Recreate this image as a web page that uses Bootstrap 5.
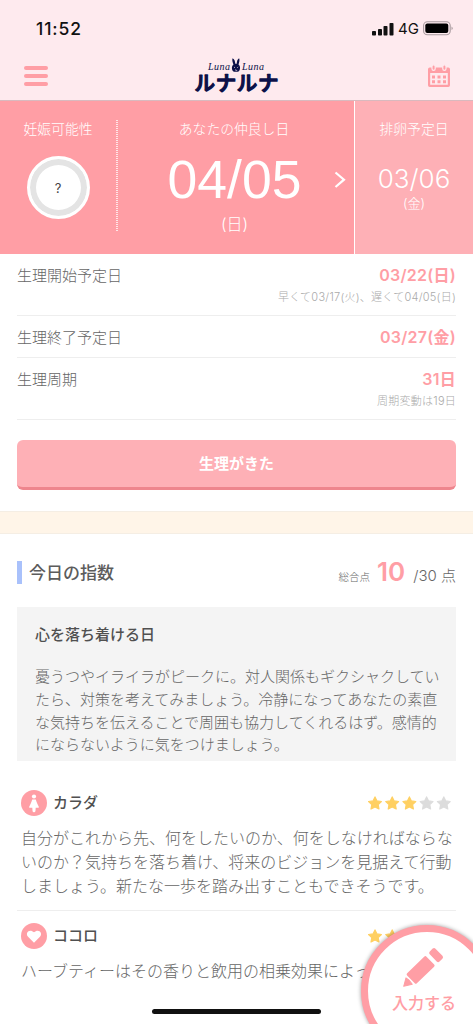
<!DOCTYPE html>
<html lang="ja">
<head>
<meta charset="utf-8">
<meta name="viewport" content="width=device-width, initial-scale=1">
<title>ルナルナ</title>
<link href="https://cdn.jsdelivr.net/npm/bootstrap@5.3.0/dist/css/bootstrap.min.css" rel="stylesheet">
<style>
:root{--pink:#ff9ea5;--pale:#feb0b6;--ink:#666}
html,body{height:1024px;overflow:hidden}
body{background:#fff;color:var(--ink);font-family:Inter,"Noto Sans CJK JP",sans-serif;font-size:15px;font-weight:300;line-height:20px}
.screen{width:473px;height:1024px;overflow:hidden;white-space:nowrap}
.gutter{padding-left:17px;padding-right:17px}
.top{height:101px;background:#feeaee;border-bottom:1px solid #d9b9be}
.status{height:53px;padding:4px 19px 0 36px;color:#111}
.clock{font-size:17.5px;font-weight:500;letter-spacing:.9px}
.net{font-size:15px;font-weight:400}
.bar{height:47px;padding:0 22px 2px 24px}
.logo{color:#0c1048;width:90px;height:42px;margin:4px 0 0 -2px;overflow:visible}
.burger i{display:block;width:24px;height:4px;border-radius:2px;background:var(--pink)}
.hero{height:153px;color:#fff;padding-top:0}
.chance{width:116px;background:var(--pink)}
.dots{width:2px;height:112px;margin-top:19px;background:repeating-linear-gradient(#ffe6e8 0 1px,var(--pink) 1px 2px)}
.hero small{font-size:13.8px;line-height:20px}
.hero .cap{margin-top:2px}
.ring{width:63px;height:63px;margin-top:17px;border:3px solid #fff;box-shadow:inset 0 0 0 6px #e4e4e4;background:#fff;color:#444;font-size:13px;font-weight:400}
.best{width:238px;background:var(--pink);position:relative}
.best .cap{margin-left:-4px}
.big{font:400 53.5px/60px "Liberation Sans",sans-serif;margin:11px 0 0 -3px}
.wday{font-size:16px;margin:4px 0 0 -3px}
.ovu{background:var(--pale);border-left:1px solid #fff}
.ovu .date{font-size:26px;font-weight:300;line-height:32px;margin-top:24px}
.ovu .wk{font-size:13px;margin-top:-2px}
.line-row{border-bottom:1px solid #eee}
.pair{padding-top:12px}
.pair>:last-child{margin-top:-1px}
.val{color:var(--pink);font-weight:600;font-size:16px;letter-spacing:.25px}
.sub{font-size:11px;line-height:16px;color:#aaa;letter-spacing:.25px}
.came{height:50px;margin-top:20px;padding-top:2px;background:var(--pale);border:0;border-bottom:3px solid #ee858d;border-radius:6px;color:#fff;font-weight:600;font-size:15px;line-height:20px}
.band{height:23px;margin-top:21px;background:#fff5e8;border-top:1px solid #f5eee4;border-bottom:1px solid #f5eee4}
.tick{width:5px;height:23px;background:#a9c1fb}
.ttl{font-size:17px;font-weight:500;color:#5c5c5c;line-height:24px;margin-left:7px}
.index-head{height:73px;padding-top:4px}
.score{padding-top:5px}
.score .cap{font-size:10.5px}
.score .pts{font-size:26px;font-weight:600;color:var(--pink);margin:0 8px 0 7px}
.advice{background:#f4f4f4;height:154px;padding:18px 18px 0}
.advice p{line-height:22.8px;padding-top:21px}
.cat{font-weight:500;color:#505050}
.long{font-size:16px;line-height:24px}
.fab{position:absolute;left:361px;top:925px;width:132px;height:132px;border:7px solid var(--pink);border-radius:50%;background:#fff;box-shadow:0 0 4px rgba(0,0,0,.4);color:var(--pink)}
.home{position:absolute;left:152px;top:1009px;width:169px;height:5px;border-radius:3px;background:#111}
</style>
</head>
<body>
<svg width="0" height="0" class="position-absolute"><defs>
<path id="star" d="M7 .9 9 4.9 13.4 5.500 10.200 8.600 11 13 7 11 3 13 3.800 8.600.6 5.500 5 4.900Z" stroke-width="1.200" stroke-linejoin="round"/>
</defs></svg>
<div class="screen position-relative">
  <header class="top">
    <div class="status d-flex align-items-center justify-content-between">
      <span class="clock">11:52</span>
      <div class="d-flex align-items-center">
        <svg width="22" height="14" viewBox="0 0 22 14" fill="#111"><rect x="0" y="9" width="4" height="4.500" rx=".8"/><rect x="6" y="7" width="4" height="6.500" rx=".8"/><rect x="11.500" y="4" width="4" height="9.500" rx=".8"/><rect x="17.500" y="1" width="4" height="12.500" rx=".8"/></svg>
        <span class="net ms-1 me-1">4G</span>
        <svg width="31" height="15" viewBox="0 0 31 15"><rect x=".6" y=".8" width="26.600" height="13" rx="3.800" fill="none" stroke="#a89a9e" stroke-width="1.100"/><rect x="2.300" y="2.600" width="23" height="9.500" rx="2" fill="#000"/><path d="M28.600 5.500q2 1.800 0 3.600Z" fill="#8f8286"/></svg>
      </div>
    </div>
    <nav class="bar d-flex align-items-center justify-content-between">
      <div class="burger d-grid gap-1" role="button" aria-label="メニュー"><i></i><i></i><i></i></div>
      <svg class="logo" viewBox="0 0 90 42" fill="currentColor" role="img" aria-label="Luna Luna ルナルナ">
        <g font-family="Liberation Serif,serif" font-style="italic" font-size="10"><text x="16" y="13" textLength="22">Luna</text><text x="50" y="13" textLength="22">Luna</text></g>
        <path d="M40.600 1.200c2 .8 2.500 3.500 2.700 5.500h1.400c.1-2 .6-4.700 2.400-5.500 1 2-.2 4.700-.6 6.300 2.400 1.500 1.900 6.300-.5 7.300h-4c-2.400-1-2.900-5.800-.5-7.300-.6-1.600-1.800-4.300-.9-6.300Z"/>
        <path d="m42 10 1 .8M46.200 10l-1 .8M43 12.800l2.200.8" stroke="#feeaee" stroke-width=".7"/>
        <text x="2.500" y="33.500" font-family="Noto Sans CJK JP,sans-serif" font-size="20.500" font-weight="500" textLength="84" stroke="currentColor" stroke-width="1.300" stroke-linejoin="round" stroke-linecap="round">ルナルナ</text>
      </svg>
      <svg width="24" height="24" viewBox="0 0 24 24" fill="#ff9ea5" role="img" aria-label="カレンダー"><path fill-rule="evenodd" d="M2.700 3.500h18.600A1.700 1.700 0 0 1 23 5.200v16.100a1.700 1.700 0 0 1-1.700 1.700H2.700A1.700 1.700 0 0 1 1 21.300V5.200a1.700 1.700 0 0 1 1.700-1.700ZM3.200 9v11.800h17.600V9Z"/><g stroke="#feeaee" stroke-width="1.200"><rect x="5" y=".8" width="3.200" height="5.600" rx="1.600"/><rect x="15.800" y=".8" width="3.200" height="5.600" rx="1.600"/></g><path d="M5 11.500h3v3H5zm5.500 0h3v3h-3zm5.500 0h3v3h-3zM5 16.200h3v3H5zm5.500 0h3v3h-3zm5.500 0h3v3h-3z"/></svg>
    </nav>
  </header>

  <section class="hero d-flex">
    <div class="chance d-flex flex-column align-items-center pt-3">
      <small class="cap">妊娠可能性</small>
      <div class="ring rounded-circle d-flex align-items-center justify-content-center">?</div>
    </div>
    <div class="best d-flex">
      <div class="dots"></div>
      <div class="flex-fill d-flex flex-column align-items-center pt-3">
        <small class="cap">あなたの仲良し日</small>
        <div class="big">04/05</div>
        <div class="wday">(日)</div>
      </div>
      <svg class="position-absolute" style="left:218px;top:70px" width="12" height="18" viewBox="0 0 12 18" fill="none" stroke="#fff" stroke-width="2.200"><path d="m1.500 1.500 8.500 7.200L1.500 16"/></svg>
    </div>
    <div class="ovu flex-fill d-flex flex-column align-items-center pt-3">
      <small class="cap">排卵予定日</small>
      <div class="date">03/06</div>
      <small class="wk">(金)</small>
    </div>
  </section>

  <section class="gutter">
    <div class="line-row pair d-flex justify-content-between" style="height:62px">
      <span>生理開始予定日</span>
      <div class="text-end"><div class="val">03/22(日)</div><div class="sub mt-1">早くて03/17(火)、遅くて04/05(日)</div></div>
    </div>
    <div class="line-row pair d-flex justify-content-between" style="height:42px">
      <span>生理終了予定日</span><span class="val">03/27(金)</span>
    </div>
    <div class="line-row pair d-flex justify-content-between" style="height:62px">
      <span>生理周期</span>
      <div class="text-end"><div class="val">31日</div><div class="sub mt-1">周期変動は19日</div></div>
    </div>
    <button class="came w-100 d-block">生理がきた</button>
  </section>

  <div class="band"></div>

  <section class="gutter">
    <div class="index-head d-flex align-items-center justify-content-between">
      <div class="d-flex align-items-center"><span class="tick"></span><span class="ttl">今日の指数</span></div>
      <div class="score d-flex align-items-baseline"><span class="cap">総合点</span><span class="pts">10</span><span>/30 点</span></div>
    </div>
    <div class="advice">
      <div class="cat">心を落ち着ける日</div>
      <p class="mb-0">憂うつやイライラがピークに。対人関係もギクシャクしてい<br>たら、対策を考えてみましょう。冷静になってあなたの素直<br>な気持ちを伝えることで周囲も協力してくれるはず。感情的<br>にならないように気をつけましょう。</p>
    </div>
    <article class="line-row" style="height:150px;padding:29px 4px 0">
      <div class="d-flex align-items-center">
        <svg width="26" height="26" viewBox="0 0 26 26"><circle cx="13" cy="13" r="13" fill="#ff9ea5"/><circle cx="13" cy="6.500" r="2.100" fill="#fff"/><path d="M11.200 9.500h3.600c.8 2.800 1.800 5 3 7.300.3.700-.2 1-.8 1h-2.300l-.2 3q-.1 1.500-1.500 1.500t-1.500-1.500l-.2-3H9c-.6 0-1.100-.3-.8-1 1.200-2.300 2.200-4.500 3-7.300Z" fill="#fff"/></svg>
        <span class="cat flex-fill" style="margin-left:6px">カラダ</span>
        <svg width="84" height="14" viewBox="0 0 84 14"><g fill="#ffd062" stroke="#ffd062"><use href="#star"/><use href="#star" x="17.200"/><use href="#star" x="34.400"/></g><g fill="#dcdcdc" stroke="#dcdcdc"><use href="#star" x="51.600"/><use href="#star" x="68.800"/></g></svg>
      </div>
      <p class="long mb-0" style="padding-top:10px">自分がこれから先、何をしたいのか、何をしなければならな<br>いのか？気持ちを落ち着け、将来のビジョンを見据えて行動<br>しましょう。新たな一歩を踏み出すこともできそうです。</p>
    </article>
    <article style="padding:12px 4px 0">
      <div class="d-flex align-items-center">
        <svg width="26" height="26" viewBox="0 0 26 26"><circle cx="13" cy="13" r="13" fill="#ff9ea5"/><path d="M13 19.700 7.300 14C3.500 10 8.500 5 13 9.300 17.500 5 22.500 10 18.700 14Z" fill="#fff"/></svg>
        <span class="cat flex-fill" style="margin-left:6px">ココロ</span>
        <svg width="84" height="14" viewBox="0 0 84 14"><g fill="#ffd062" stroke="#ffd062"><use href="#star"/><use href="#star" x="17.200"/></g></svg>
      </div>
      <p class="long mb-0" style="padding-top:10px">ハーブティーはその香りと飲用の相乗効果によっ</p>
    </article>
  </section>

  <div class="fab" role="button">
    <svg class="position-absolute" style="left:34px;top:13px" width="46" height="44" viewBox="0 0 46 44" fill="#ff9ea5"><g transform="translate(1 42) rotate(-44)"><path d="M1 0 8.500-4.500Q10 0 8.500 4.500Z" stroke="#ff9ea5" stroke-linejoin="round"/><rect x="11" y="-7" width="27" height="14" rx="1.500"/><rect x="42" y="-7" width="8" height="14" rx="2"/></g></svg>
    <span class="position-absolute" style="left:24px;top:61px;font-size:16px;font-weight:500">入力する</span>
  </div>
  <div class="home"></div>
</div>
<script src="https://cdn.jsdelivr.net/npm/bootstrap@5.3.0/dist/js/bootstrap.bundle.min.js"></script>
</body>
</html>
